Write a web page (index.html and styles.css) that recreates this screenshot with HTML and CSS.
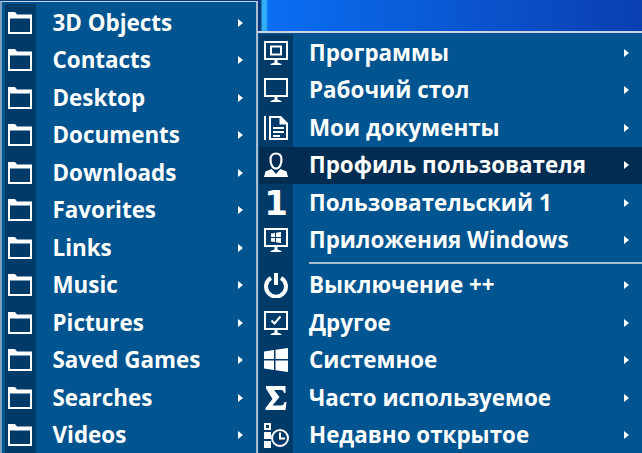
FILE: index.html
```html
<!DOCTYPE html>
<html lang="ru">
<head>
<meta charset="utf-8">
<title>Menu</title>
<link rel="stylesheet" href="styles.css">
</head>
<body>
<svg class="defs" width="0" height="0">
<defs>
<symbol id="folder" viewBox="0 0 26 24"><path d="M1 3.500V1h7l2 2.500h15V23H1z M3 7.500V21H23V7.500z" fill="#fff" fill-rule="evenodd"/></symbol>
</defs>
</svg>
<div class="desktop">
<nav class="menu menu-left">
<div class="item"><span class="gutter"><svg class="ico-folder"><use href="#folder"/></svg></span><span class="label">3D Objects</span><span class="arrow"></span></div>
<div class="item"><span class="gutter"><svg class="ico-folder"><use href="#folder"/></svg></span><span class="label">Contacts</span><span class="arrow"></span></div>
<div class="item"><span class="gutter"><svg class="ico-folder"><use href="#folder"/></svg></span><span class="label">Desktop</span><span class="arrow"></span></div>
<div class="item"><span class="gutter"><svg class="ico-folder"><use href="#folder"/></svg></span><span class="label">Documents</span><span class="arrow"></span></div>
<div class="item"><span class="gutter"><svg class="ico-folder"><use href="#folder"/></svg></span><span class="label">Downloads</span><span class="arrow"></span></div>
<div class="item"><span class="gutter"><svg class="ico-folder"><use href="#folder"/></svg></span><span class="label">Favorites</span><span class="arrow"></span></div>
<div class="item"><span class="gutter"><svg class="ico-folder"><use href="#folder"/></svg></span><span class="label">Links</span><span class="arrow"></span></div>
<div class="item"><span class="gutter"><svg class="ico-folder"><use href="#folder"/></svg></span><span class="label">Music</span><span class="arrow"></span></div>
<div class="item"><span class="gutter"><svg class="ico-folder"><use href="#folder"/></svg></span><span class="label">Pictures</span><span class="arrow"></span></div>
<div class="item"><span class="gutter"><svg class="ico-folder"><use href="#folder"/></svg></span><span class="label">Saved Games</span><span class="arrow"></span></div>
<div class="item"><span class="gutter"><svg class="ico-folder"><use href="#folder"/></svg></span><span class="label">Searches</span><span class="arrow"></span></div>
<div class="item"><span class="gutter"><svg class="ico-folder"><use href="#folder"/></svg></span><span class="label">Videos</span><span class="arrow"></span></div>
</nav>
<nav class="menu menu-right">
<div class="item"><span class="gutter"><svg class="ico" viewBox="0 0 26 26"><path fill="#fff" fill-rule="evenodd" d="M1 1H25V20H1zM3 3V18H23V3z"/><path fill="#fff" fill-rule="evenodd" d="M7 5.500H19V15.500H7zM9 7.500V13.500H17V7.500z"/><path fill="#fff" d="M11.500 20h3v2.500l4 1.500v1H7.500v-1l4-1.500z"/></svg></span><span class="label">Программы</span><span class="arrow"></span></div>
<div class="item"><span class="gutter"><svg class="ico" viewBox="0 0 26 26"><path fill="#fff" fill-rule="evenodd" d="M1 1H25V20H1zM3 3V18H23V3z"/><path fill="#fff" d="M11.500 20h3v2.500l4 1.500v1H7.500v-1l4-1.500z"/></svg></span><span class="label">Рабочий стол</span><span class="arrow"></span></div>
<div class="item"><span class="gutter"><svg class="ico" viewBox="0 0 26 26"><path fill="#fff" d="M1 1h2v24H1z"/><path fill="#fff" fill-rule="evenodd" d="M6 1H18L25 8V25H6zM8 3V23H23V9.500H16.500V3z"/><path fill="#fff" d="M10 12h11v2H10zM10 16h11v2H10zM10 20h7v2H10z"/></svg></span><span class="label">Мои документы</span><span class="arrow"></span></div>
<div class="item selected"><span class="gutter"><svg class="ico" viewBox="0 0 26 26"><path fill="none" stroke="#fff" stroke-width="2.200" d="M13 1.500c-3.500 0-5.500 2.500-5.500 6 0 4.500 2 9 5.500 9s5.500-4.500 5.500-9c0-3.500-2-6-5.500-6z"/><path fill="#fff" d="M8.500 17l1.500 1.500 3 3.500 3-3.500 1.500-1.500 6 2.500 1.500 5.500H1l1.500-5.500z"/></svg></span><span class="label">Профиль пользователя</span><span class="arrow"></span></div>
<div class="item"><span class="gutter"><span class="digit">1</span></span><span class="label">Пользовательский 1</span><span class="arrow"></span></div>
<div class="item"><span class="gutter"><svg class="ico" viewBox="0 0 26 26"><path fill="#fff" fill-rule="evenodd" d="M1 1H25V20H1zM3 3V18H23V3z"/><path fill="#fff" d="M8 6.500l4-.6V10H8zM13 5.800l5-.8V10h-5zM8 11h4v4.100l-4-.6zM13 11h5v5l-5-.8z"/><path fill="#fff" d="M11.500 20h3v2.500l4 1.500v1H7.500v-1l4-1.500z"/></svg></span><span class="label">Приложения Windows</span><span class="arrow"></span></div>
<div class="sep-row"><span class="gutter"></span><span class="sep"></span></div>
<div class="item"><span class="gutter"><svg class="ico" viewBox="0 0 26 26"><path fill="none" stroke="#fff" stroke-width="4" d="M8 6a10 10 0 1 0 10 0"/><path fill="#fff" d="M11 1h4v12h-4z"/></svg></span><span class="label">Выключение ++</span><span class="arrow"></span></div>
<div class="item"><span class="gutter"><svg class="ico" viewBox="0 0 26 26"><path fill="#fff" fill-rule="evenodd" d="M1 1H25V20H1zM3 3V18H23V3z"/><path fill="none" stroke="#fff" stroke-width="2" d="M8.500 10.500l3 3 6-7"/><path fill="#fff" d="M11.500 20h3v2.500l4 1.500v1H7.500v-1l4-1.500z"/></svg></span><span class="label">Другое</span><span class="arrow"></span></div>
<div class="item"><span class="gutter"><svg class="ico" viewBox="0 0 26 26"><path fill="#fff" d="M1 4.500l10-1.500V12H1zM12.500 2.800L25 1V12H12.500zM1 13.500h10V23L1 21.500zM12.500 13.500H25V25l-12.500-1.800z"/></svg></span><span class="label">Системное</span><span class="arrow"></span></div>
<div class="item"><span class="gutter"><svg class="ico" viewBox="0 0 26 26"><path fill="#fff" d="M3 1H22.500V8H21C20.500 5.500 19.500 5 17 5H11L16.500 12 9.500 20.500H17.500C20 20.500 21 19.500 21.500 17H23.500L22.500 25H2.500V23L9.500 14 3 3.500z"/></svg></span><span class="label">Часто используемое</span><span class="arrow"></span></div>
<div class="item"><span class="gutter"><svg class="ico" viewBox="0 0 26 26"><path fill="#fff" fill-rule="evenodd" d="M1 1H8V8H1zM3 3V6H6V3z"/><path fill="#fff" d="M1 10H8V17H1zM1 19H8V26H1z"/><path fill="none" stroke="#fff" stroke-width="2" d="M25 16a8 8 0 1 1-16 0a8 8 0 1 1 16 0zM17 10.500V16.500H22"/></svg></span><span class="label">Недавно открытое</span><span class="arrow"></span></div>
</nav>
</div>
</body>
</html>
```
FILE: styles.css
```css
* { box-sizing: border-box; }
html, body { margin: 0; padding: 0; }
body { width: 642px; height: 453px; overflow: hidden; }
.defs { position: absolute; }
.desktop {
  display: flex;
  align-items: flex-start;
  width: 642px;
  height: 453px;
  overflow: hidden;
  background: linear-gradient(90deg, #0a3a80 258px, #0a3a80 261px, #2fb0f5 262px, #2fb0f5 266px, #0a6ef2 268px, #0a3fb0 642px);
  font-family: "Open Sans", "Noto Sans", sans-serif;
  font-weight: 700;
  font-size: 22.400px;
  color: #fff;
}
.menu {
  background: #00548f;
  display: flex;
  flex-direction: column;
  overflow: hidden;
}
.menu-left {
  width: 258px;
  height: 452px;
  flex: none;
  padding: 2px 0 0 3px;
  margin-top: 1px;
  border-top: 1px solid #c8d4e0;
  border-right: 2px solid #a9bccd;
  border-left: 2px solid #7fa0bc;
}
.menu-right {
  flex: 1;
  height: 422px;
  margin-top: 31px;
  padding-left: 1px;
  padding-top: 1px;
  border-top: 2px solid #c8d4e0;
}
.item {
  display: flex;
  align-items: center;
  height: 37.500px;
  flex: none;
}
.gutter {
  display: flex;
  align-items: center;
  justify-content: center;
  flex: none;
  align-self: stretch;
  background: #003a68;
}
.menu-left .gutter { width: 31px; }
.menu-right .gutter { width: 34px; }
.menu-left .label { padding-left: 16.500px; }
.label {
  flex: 1;
  padding-left: 16px;
  line-height: 1;
  white-space: nowrap;
}
.arrow {
  flex: none;
  width: 0;
  height: 0;
  border-left: 5px solid #fff;
  border-top: 4.500px solid transparent;
  border-bottom: 4.500px solid transparent;
  margin-right: 13px;
}
.selected { background: #032c52; }
.selected .gutter { background: transparent; }
.ico { width: 26px; height: 26px; }
.ico-folder { width: 26px; height: 24px; margin-left: -1px; }
.digit {
  font-family: "DejaVu Sans", sans-serif;
  font-weight: 700;
  font-size: 34px;
  line-height: 1;
}
.sep-row {
  display: flex;
  height: 7.500px;
  flex: none;
  align-items: center;
}
.sep-row .gutter { height: 100%; }
.sep { flex: 1; height: 1.500px; margin-left: 16px; background: #a9bccd; }
```
